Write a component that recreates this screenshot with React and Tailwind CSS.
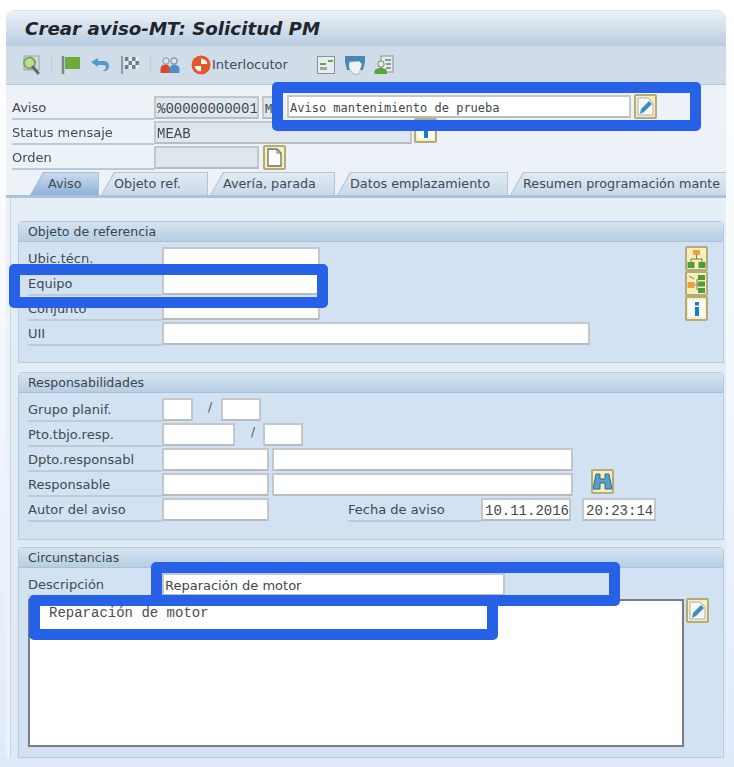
import React from 'react';

const sans = "font-['DejaVu_Sans',sans-serif]";
const mono = "font-['DejaVu_Sans_Mono','Liberation_Mono',monospace]";
const courier = "font-['Liberation_Mono',monospace]";

// --- toolbar icons ---
function GlassIcon() {
  return (
    <svg width="20" height="20" viewBox="0 0 20 20" className="shrink-0">
      <rect x="3" y="1" width="15" height="14" fill="#d5dad8" stroke="#9aa5a5" />
      <circle cx="8.5" cy="8" r="5.5" fill="#b9e08c" stroke="#7da56a" strokeWidth="2" />
      <path d="M12 12l5 6" stroke="#5f6b70" strokeWidth="3" strokeLinecap="round" />
    </svg>
  );
}

function FlagIcon() {
  return (
    <svg width="20" height="20" viewBox="0 0 20 20" className="shrink-0">
      <path d="M2 1v18" stroke="#7c8a80" strokeWidth="2.5" />
      <path d="M4 2h15v12H4z" fill="#6dab3c" />
    </svg>
  );
}

function UndoIcon() {
  return (
    <svg width="20" height="20" viewBox="0 0 20 20" className="shrink-0">
      <path d="M1 7l7-4v3h6c4 0 5 3 5 5s-1 4-3 5h-3c2-1 3-3 3-4s-1-2-3-2H8v2z" fill="#4f9ad2" />
    </svg>
  );
}

function CheckeredIcon() {
  return (
    <svg width="20" height="20" viewBox="0 0 20 20" className="shrink-0">
      <path d="M2 1v18" stroke="#7c8a90" strokeWidth="1.6" />
      <path d="M5 2h14v12H5z" fill="#e9edf0" />
      <path d="M5 2h3.5v4H5zM12 2h3.5v4H12zM8.5 6H12v4H8.5zM15.5 6H19v4h-3.5zM5 10h3.5v4H5zM12 10h3.5v4H12z" fill="#737c85" />
    </svg>
  );
}

function PersonsIcon() {
  return (
    <svg width="20" height="20" viewBox="0 0 20 20" className="shrink-0">
      <circle cx="6" cy="6" r="3.2" fill="#d9e2ea" stroke="#8c8f98" />
      <circle cx="14" cy="6" r="3.2" fill="#d9e2ea" stroke="#5d7f9e" />
      <path d="M0.5 18v-4c0-3 2-4.500 5-4.500s4.500 1.500 4.500 4.500v4z" fill="#d9492f" />
      <path d="M10 18v-4c0-3 1.500-4.500 4-4.500s5.500 1.500 5.500 4.500v4z" fill="#4c8fc7" />
    </svg>
  );
}

function LifebuoyIcon() {
  return (
    <svg width="20" height="20" viewBox="0 0 20 20" className="shrink-0">
      <circle cx="10" cy="10" r="9.500" fill="#e0592a" />
      <path d="M10 9V3.500A6.500 6.500 0 0 1 16.500 9zM10 11v5.500A6.500 6.500 0 0 1 3.500 11z" fill="#fbf3ec" />
    </svg>
  );
}

function SheetIcon() {
  return (
    <svg width="20" height="20" viewBox="0 0 20 20" className="shrink-0">
      <rect x="1.500" y="1.500" width="17" height="17" fill="#e9ecec" stroke="#8a9296" />
      <rect x="4" y="8" width="6" height="2" fill="#6aa545" />
      <rect x="12" y="5" width="5" height="2" fill="#6aa545" />
      <rect x="4" y="12" width="7" height="3" fill="#9aa5a8" />
    </svg>
  );
}

function TrayIcon() {
  return (
    <svg width="20" height="20" viewBox="0 0 20 20" className="shrink-0">
      <path d="M0 1h20v6l-2 8h-16l-2-8z" fill="#4288b8" />
      <path d="M4 7l10-1 3 3-3 10H8L4 13z" fill="#f0f2f3" stroke="#8b9aa4" strokeWidth="0.6" />
    </svg>
  );
}

function PersonCardIcon() {
  return (
    <svg width="20" height="20" viewBox="0 0 20 20" className="shrink-0">
      <rect x="7" y="1" width="12" height="16" fill="#e6e9ea" stroke="#8a9296" />
      <path d="M11 5h6M12 9h5M12 13h5" stroke="#767f84" strokeWidth="1.300" />
      <circle cx="7" cy="9" r="3.200" fill="#e4e8e2" stroke="#6f8b70" />
      <path d="M0.500 19v-2c0-3 3-4 6.500-4s6 1 6 4v2z" fill="#55a53c" />
    </svg>
  );
}

// --- yellow framed push button ---
function Btn({ children, className = '' }) {
  return (
    <div className={`flex items-center justify-center shrink-0 w-[23px] h-[25px] rounded-[2px] border-2 border-[#b3ab7c] bg-[#f8efb8] ${className}`}>
      {children}
    </div>
  );
}

function PencilGlyph() {
  return (
    <svg width="17" height="19" viewBox="0 0 17 19">
      <path d="M1 1h10l5 5v12H1z" fill="#f5f7f8" stroke="#a9b0b3" />
      <path d="M3 17l1-5 8-8 3 3-8 8z" fill="#3b8fbe" />
    </svg>
  );
}

function InfoGlyph() {
  return (
    <svg width="17" height="17" viewBox="0 0 17 17">
      <rect width="17" height="17" fill="#fafcfd" />
      <rect x="7" y="2" width="4" height="3.500" fill="#1d7cc0" />
      <rect x="7" y="7" width="4" height="9" fill="#1d7cc0" />
    </svg>
  );
}

function DocGlyph() {
  return (
    <svg width="15" height="19" viewBox="0 0 15 19">
      <path d="M1 1h9l4 4v13H1z" fill="#fbfcfc" stroke="#6d6f68" strokeWidth="1.300" />
      <path d="M10 1v4h4" fill="none" stroke="#6d6f68" />
    </svg>
  );
}

function TreeGlyph() {
  return (
    <svg width="19" height="20" viewBox="0 0 19 20">
      <rect x="6" y="1" width="7" height="5" fill="#ee9f43" />
      <path d="M9.500 6v4M4 13v-3h11v3" stroke="#6f7d5f" fill="none" />
      <rect x="0.500" y="13" width="7" height="6" fill="#4f9a3c" />
      <rect x="11.500" y="13" width="7" height="6" fill="#4f9a3c" />
    </svg>
  );
}

function TreeSideGlyph() {
  return (
    <svg width="19" height="20" viewBox="0 0 19 20">
      <rect x="0.500" y="8" width="7" height="6" fill="#ee9f43" />
      <path d="M2 2l5 3M7.500 11H10M10 5v11" stroke="#6f7d5f" fill="none" />
      <rect x="11" y="1" width="7" height="5" fill="#4f9a3c" />
      <rect x="11" y="7.500" width="7" height="5" fill="#4f9a3c" />
      <rect x="11" y="14" width="7" height="5" fill="#4f9a3c" />
    </svg>
  );
}

function BinocularsGlyph() {
  return (
    <svg width="19" height="19" viewBox="0 0 19 19">
      <path d="M3 2h4v5h5V2h4l3 15h-7V11H7v6H0z" fill="#5b9fc6" stroke="#2a6b96" strokeWidth="1" />
    </svg>
  );
}

// --- form pieces ---
function Input({ w, value, font = mono, bg = 'bg-white', size = 'text-[12px]', className = '' }) {
  return (
    <div className={`h-[23px] shrink-0 border-2 border-[#c4c7c9] border-b-[#b8bcbf] rounded-[1px] pl-[1px] leading-[22px] text-[#3f4750] overflow-hidden whitespace-nowrap ${bg} ${size} ${font} ${w} ${className}`}>
      {value}
    </div>
  );
}

function Label({ children, w = 'w-[134px]' }) {
  return (
    <div className={`h-[24px] shrink-0 border-b-2 border-[#bccbda] text-[13px] leading-[23px] text-[#414a52] whitespace-nowrap ${w}`}>
      {children}
    </div>
  );
}

function Row({ children }) {
  return <div className="flex items-start h-[25px]">{children}</div>;
}

function Group({ title, className = '', bodyClass = '', children }) {
  return (
    <section className={`border border-[#b8cadb] rounded-t-[4px] bg-[#d2e2f2] ${className}`}>
      <div className="h-[20px] pl-[9px] text-[12.500px] leading-[19px] text-[#39434d] bg-gradient-to-b from-[#d6e3f1] to-[#b7cee4] border-b border-[#a9c0d6]">
        {title}
      </div>
      <div className={`pl-[9px] ${bodyClass}`}>{children}</div>
    </section>
  );
}

// outer shape gives the 1px tab outline, inner shape the fill
function Tab({ label, w, active, pad = 'pl-[13px]' }) {
  return (
    <div className={`h-[23px] shrink-0 pt-px pr-px [clip-path:polygon(13px_0,100%_0,100%_100%,0_100%)] ${w} ${active ? 'bg-[#a7c0d9]' : 'bg-[#b5c5d4]'}`}>
      <div
        className={`h-full text-[12.750px] leading-[22px] text-[#3f4a55] whitespace-nowrap overflow-hidden [clip-path:polygon(14px_0,100%_0,100%_100%,1px_100%)] ${pad} ${
          active ? 'bg-gradient-to-b from-[#c9dbec] to-[#8fb2d8]' : 'bg-gradient-to-b from-[#e2eaf2] to-[#c8d9ea]'
        }`}
      >
        {label}
      </div>
    </div>
  );
}

function Highlight({ className }) {
  return <div className={`absolute border-[11px] border-[#2761e8] rounded-[5px] ${className}`} />;
}

export default function App() {
  return (
    <div className={`relative w-[734px] h-[767px] overflow-hidden bg-gradient-to-b from-white via-[#f3f7fd] to-[#e0eafb] ${sans}`}>
      <div className="absolute inset-x-0 bottom-0 h-[9px] bg-[#dfe9fa]" />

      <div className="relative blur-[0.5px] ml-[6px] mt-[10px] w-[720px] h-[748px] rounded-t-[9px] overflow-hidden bg-[#edf2f8] flex flex-col border-t border-[#dfe4e9]">
        {/* title bar */}
        <div className="h-[35px] shrink-0 pl-[19px] flex items-center bg-gradient-to-b from-[#edf2f7] to-[#b8cce1]">
          <h1 className="text-[18.250px] font-bold italic text-[#1f262d] whitespace-nowrap">Crear aviso-MT: Solicitud PM</h1>
        </div>

        {/* toolbar */}
        <div className="h-[39px] shrink-0 flex items-center pl-[15px] bg-[#d0dde9] border-b border-[#bcc8d3]">
          <GlassIcon />
          <div className="ml-[10px] w-px h-[18px] bg-[#c0ccd7]" />
          <div className="ml-[9px]"><FlagIcon /></div>
          <div className="ml-[9px]"><UndoIcon /></div>
          <div className="ml-[10px]"><CheckeredIcon /></div>
          <div className="ml-[10px] w-px h-[18px] bg-[#c0ccd7]" />
          <div className="ml-[9px]"><PersonsIcon /></div>
          <div className="ml-[11px]"><LifebuoyIcon /></div>
          <span className="ml-[1px] w-[81px] text-[13px] text-[#3f4a5c] whitespace-nowrap">Interlocutor</span>
          <div className="ml-[23px]"><SheetIcon /></div>
          <div className="ml-[9px]"><TrayIcon /></div>
          <div className="ml-[9px]"><PersonCardIcon /></div>
        </div>

        {/* header fields */}
        <div className="h-[87px] shrink-0 pl-[6px] pt-[11px] bg-[#edf2f8] flex flex-col">
          <Row>
            <Label w="w-[142px]">Aviso</Label>
            <Input w="w-[105px]" value="%00000000001" bg="bg-[#dfe7ee]" size="text-[14px]" font={courier} />
            <Input w="w-[17px]" value="M" bg="bg-[#dfe7ee]" className="ml-[3px]" />
            <Input w="w-[344px]" value="Aviso mantenimiento de prueba" className="ml-[8px] -mt-[1px]" />
            <Btn className="ml-[3px] -mt-[2px]"><PencilGlyph /></Btn>
          </Row>
          <Row>
            <Label w="w-[142px]">Status mensaje</Label>
            <Input w="w-[258px]" value="MEAB" bg="bg-[#dfe7ee]" size="text-[14px]" font={courier} />
            <Btn className="ml-[2px] -mt-[3px]"><InfoGlyph /></Btn>
          </Row>
          <Row>
            <Label w="w-[142px]">Orden</Label>
            <Input w="w-[105px]" value="" bg="bg-[#dfe7ee]" />
            <Btn className="ml-[4px] -mt-[1px]"><DocGlyph /></Btn>
          </Row>
        </div>

        {/* tabs */}
        <div className="h-[23px] shrink-0 flex gap-[2px] pl-[24px] overflow-hidden bg-[#edf2f8]">
          <Tab label="Aviso" w="w-[69px]" active pad="pl-[18px]" />
          <Tab label="Objeto ref." w="w-[107px]" />
          <Tab label="Avería, parada" w="w-[125px]" />
          <Tab label="Datos emplazamiento" w="w-[171px]" />
          <Tab label="Resumen programación mante" w="w-[230px]" />
        </div>
        <div className="h-[3px] shrink-0 bg-[#a9c3dc]" />

        {/* tab content */}
        <div className="grow ml-[4px] border-l border-[#c8d5e2] pl-[7px] pr-[2px] pt-[23px] bg-gradient-to-b from-[#e6eef6] to-[#dde9f5] flex flex-col">
          <Group title="Objeto de referencia" className="h-[142px]" bodyClass="pt-[5px] flex">
            <div>
              <Row><Label>Ubic.técn.</Label><Input w="w-[158px]" /></Row>
              <Row><Label>Equipo</Label><Input w="w-[158px]" /></Row>
              <Row><Label>Conjunto</Label><Input w="w-[158px]" /></Row>
              <Row><Label>UII</Label><Input w="w-[428px]" /></Row>
            </div>
            <div className="ml-auto mr-[15px] -mt-[1px] flex flex-col">
              <Btn><TreeGlyph /></Btn>
              <Btn><TreeSideGlyph /></Btn>
              <Btn><InfoGlyph /></Btn>
            </div>
          </Group>

          <Group title="Responsabilidades" className="mt-[9px] h-[168px]" bodyClass="pt-[5px]">
            <Row>
              <Label>Grupo planif.</Label>
              <Input w="w-[31px]" />
              <span className="ml-[15px] w-[13px] text-[12px] text-[#4a525a]">/</span>
              <Input w="w-[40px]" />
            </Row>
            <Row>
              <Label>Pto.tbjo.resp.</Label>
              <Input w="w-[73px]" />
              <span className="ml-[16px] w-[12px] text-[12px] text-[#4a525a]">/</span>
              <Input w="w-[40px]" />
            </Row>
            <Row>
              <Label>Dpto.responsabl</Label>
              <Input w="w-[107px]" />
              <Input w="w-[301px]" className="ml-[3px]" />
            </Row>
            <Row>
              <Label>Responsable</Label>
              <Input w="w-[107px]" />
              <Input w="w-[301px]" className="ml-[3px]" />
              <Btn className="ml-[18px] -mt-[4px]"><BinocularsGlyph /></Btn>
            </Row>
            <Row>
              <Label>Autor del aviso</Label>
              <Input w="w-[107px]" />
              <div className="ml-[79px]"><Label w="w-[134px]">Fecha de aviso</Label></div>
              <Input w="w-[90px]" value="10.11.2016" size="text-[14px]" font={courier} className="-ml-[1px] pl-[2px]" />
              <Input w="w-[74px]" value="20:23:14" size="text-[14px]" font={courier} className="ml-[11px] pl-[2px]" />
            </Row>
          </Group>

          <Group title="Circunstancias" className="mt-[7px] grow rounded-b-none" bodyClass="pt-[5px]">
            <div className="flex items-start h-[26px]">
              <Label>Descripción</Label>
              <Input w="w-[343px]" value="Reparación de motor" font={sans} size="text-[13px]" className="pl-0" />
            </div>
            <div className="flex items-start">
              <div className={`w-[656px] h-[148px] bg-white border-2 border-[#7a7d80] text-[14px] text-[#4c4d52] pl-[19px] pt-[2px] ${courier}`}>
                Reparación de motor
              </div>
              <Btn className="ml-[2px] -mt-[1px]"><PencilGlyph /></Btn>
            </div>
          </Group>
        </div>
      </div>

      {/* blue annotation frames */}
      <Highlight className="left-[272px] top-[82px] w-[429px] h-[49px]" />
      <Highlight className="left-[9px] top-[264px] w-[319px] h-[44px]" />
      <Highlight className="left-[151px] top-[562px] w-[469px] h-[44px]" />
      <Highlight className="left-[29px] top-[595px] w-[469px] h-[45px]" />
    </div>
  );
}
